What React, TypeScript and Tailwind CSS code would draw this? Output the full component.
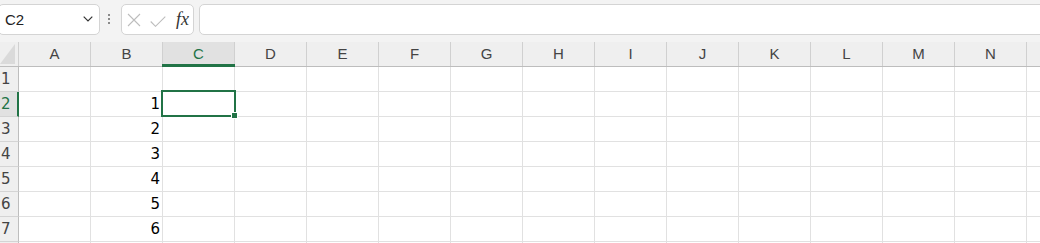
import React from "react";

const cols = ["A", "B", "C", "D", "E", "F", "G", "H", "I", "J", "K", "L", "M", "N", "O"];
const rows = [1, 2, 3, 4, 5, 6, 7, 8];
const values: Record<number, string> = { 2: "1", 3: "2", 4: "3", 5: "4", 6: "5", 7: "6" };

export default function App() {
  return (
    <div className="relative w-[1040px] h-[243px] overflow-hidden bg-white" style={{ fontFamily: '"Liberation Sans", Arial, sans-serif' }}>
      {/* Toolbar */}
      <div className="h-[42px] bg-[#f3f3f3] flex items-start pt-[4px]">
        <div className="ml-[-2px] w-[102px] h-[31px] shrink-0 rounded-[5px] border border-[#d4d4d4] bg-white flex items-center justify-between pl-[6px] pr-[6px]">
          <span className="text-[15px] text-[#222] leading-none">C2</span>
          <svg width="10" height="6" viewBox="0 0 10 6" className="mb-[1px]">
            <path d="M0.7 0.7 L5 5 L9.3 0.7" fill="none" stroke="#333" strokeWidth="1.2" />
          </svg>
        </div>
        <div className="ml-[8px] mt-[10px] w-[3px] flex flex-col gap-[2px] shrink-0">
          <div className="w-[2px] h-[2px] bg-[#8a8a8a]" />
          <div className="w-[2px] h-[2px] bg-[#8a8a8a]" />
          <div className="w-[2px] h-[2px] bg-[#8a8a8a]" />
        </div>
        <div className="ml-[10px] w-[73px] h-[31px] shrink-0 rounded-[5px] border border-[#d4d4d4] bg-white flex items-center pl-[5px]">
          <svg width="14" height="14" viewBox="0 0 14 14">
            <path d="M1 1 L13 13 M13 1 L1 13" stroke="#bdbdbd" strokeWidth="1.1" fill="none" />
          </svg>
          <svg width="16" height="11" viewBox="0 0 16 11" className="ml-[9px] mt-[3px]">
            <path d="M0.7 5.5 L5.5 10.3 L15.3 0.7" stroke="#bdbdbd" strokeWidth="1.1" fill="none" />
          </svg>
          <span className="ml-[10px] text-[18px] italic leading-none text-[#333] mb-[2px]" style={{ fontFamily: '"Liberation Serif", "Times New Roman", serif' }}>
            fx
          </span>
        </div>
        <div className="ml-[5px] flex-1 h-[31px] mr-[-10px] rounded-[5px] border border-[#d4d4d4] bg-white" />
      </div>

      {/* Column header */}
      <div className="flex h-[25px] bg-[#efefef] border-b border-[#bdbdbd]">
        <div className="w-[19px] shrink-0 border-r border-[#d0d0d0] relative">
          <svg width="15" height="20" viewBox="0 0 15 20" className="absolute left-0 top-[2px]">
            <polygon points="15,0 15,20 0,20" fill="#dadada" />
          </svg>
        </div>
        {cols.map((c) => (
          <div
            key={c}
            className={
              c === "C"
                ? "relative w-[72px] shrink-0 border-r border-[#d0d0d0] bg-[#e1e1e1] flex items-center justify-center text-[15px] text-[#217346]"
                : "w-[72px] shrink-0 border-r border-[#d0d0d0] flex items-center justify-center text-[15px] text-[#444]"
            }
          >
            {c === "O" ? "" : c}
            {c === "C" && <div className="absolute left-[-1px] right-[-1px] bottom-[-1px] h-[3px] bg-[#217346]" />}
          </div>
        ))}
      </div>

      {/* Rows */}
      {rows.map((r) => (
        <div key={r} className="flex h-[25px]">
          <div
            className={
              r === 2
                ? "w-[19px] shrink-0 h-full bg-[#e1e1e1] border-r-2 border-r-[#217346] border-b border-b-[#d4d4d4] flex items-center pl-[1px] text-[15px] text-[#217346]"
                : "w-[19px] shrink-0 h-full bg-[#efefef] border-r border-r-[#bdbdbd] border-b border-b-[#d4d4d4] flex items-center pl-[1px] text-[15px] text-[#444]"
            }
            style={{ fontFamily: '"DejaVu Sans", sans-serif' }}
          >
            {r < 8 ? r : ""}
          </div>
          {cols.map((c) => (
            <div
              key={c}
              className="w-[72px] shrink-0 h-full border-r border-b border-[#e1e1e1] flex items-center justify-end pr-[2px] text-[15px] text-black"
              style={{ fontFamily: '"DejaVu Sans", sans-serif' }}
            >
              {c === "B" ? values[r] ?? "" : ""}
            </div>
          ))}
        </div>
      ))}

      {/* Selection */}
      <div className="absolute left-[161px] top-[90px] w-[75px] h-[27px] border-2 border-[#217346]" />
      <div className="absolute left-[231px] top-[112px] w-[7px] h-[7px] bg-[#217346] border border-white" />
    </div>
  );
}
